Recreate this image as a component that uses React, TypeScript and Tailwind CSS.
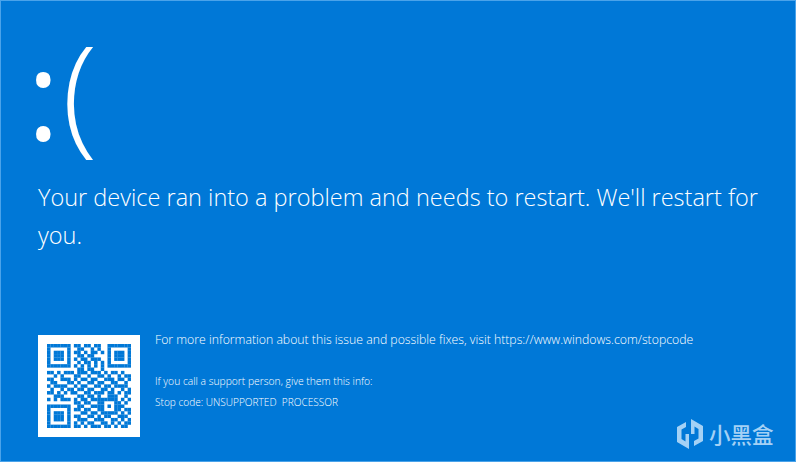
const QR = [
  "1111111011011011001111111",
  "1000001001100101001000001",
  "1011101011010110101011101",
  "1011101001101100001011101",
  "1011101010110111001011101",
  "1000001001011010101000001",
  "1111111010101010101111111",
  "0000000001101100100000000",
  "1101011101110111010110100",
  "0010100011001001101001011",
  "1100111010110110011101101",
  "0110001101001101100110010",
  "1011110010110011011011110",
  "0100101101101100110100101",
  "1101010110011011101101011",
  "0011100001101101001110010",
  "1010111010110111111110101",
  "0000000011011001100011010",
  "1111111001100111101011100",
  "1000001011011001100011011",
  "1011101000110110111110101",
  "1011101011001101011001110",
  "1011101001110011100110101",
  "1000001010101100110101011",
  "1111111011010111011010110",
];

function QrCode() {
  return (
    <svg width="84" height="84" viewBox="0 0 25 25">
      {QR.flatMap((row, y) =>
        row.split("").map((c, x) =>
          c === "1" ? <rect key={`${x}-${y}`} x={x} y={y} width="1.04" height="1.04" fill="#0078d7" /> : null
        )
      )}
    </svg>
  );
}

function Logo() {
  return (
    <svg width="26" height="30" viewBox="0 0 26 30" fill="#a4d1f5">
      <path d="M0 8 L9 3 V8 L4.5 10.5 V20 L8.5 22.5 V15 H12 V30 L0 23 Z" />
      <path d="M26 22 L17 27 V22 L21.5 19.5 V10 L17.5 7.5 V15 H14 V0 L26 7 Z" />
    </svg>
  );
}

export default function App() {
  return (
    <div
      className="w-[796px] h-[462px] overflow-hidden border border-[#4aa3ea] bg-[#0078d7] text-white pl-[37px] flex flex-col relative"
      style={{ fontFamily: '"Open Sans", "Noto Sans", sans-serif' }}
    >
      <div className="h-[140px] flex items-start mt-[29px]">
        <span className="text-[124px] leading-[118px] font-normal w-[27px] mt-[3px] -ml-[11px] shrink-0">:</span>
        <span className="text-[130px] leading-[118px] font-light ml-[8px] mt-[1px]">(</span>
      </div>
      <p className="mt-[8px] text-[23.5px] leading-[38px] font-light w-[730px]">
        Your device ran into a problem and needs to restart. We'll restart for you.
      </p>
      <div className="mt-[81px] flex items-start">
        <div className="w-[102px] h-[102px] bg-white flex items-center justify-center shrink-0">
          <QrCode />
        </div>
        <div className="ml-[15px] flex flex-col">
          <p className="text-[12.25px] leading-[16px] font-light -mt-[3px] whitespace-nowrap">
            For more information about this issue and possible fixes, visit https://www.windows.com/stopcode
          </p>
          <p className="text-[10.3px] leading-[14px] font-light mt-[26px] whitespace-nowrap">If you call a support person, give them this info:</p>
          <p className="text-[10.1px] leading-[14px] font-light mt-[7px] whitespace-nowrap">Stop code: UNSUPPORTED{"\u00a0\u00a0"}PROCESSOR</p>
        </div>
      </div>
      <div className="absolute left-[676px] top-[418px] flex items-center gap-[6px] text-[#a4d1f5]">
        <Logo />
        <span
          className="text-[21.5px] leading-[30px] font-medium"
          style={{ fontFamily: '"Noto Sans CJK SC", sans-serif' }}
        >
          小黑盒
        </span>
      </div>
    </div>
  );
}
